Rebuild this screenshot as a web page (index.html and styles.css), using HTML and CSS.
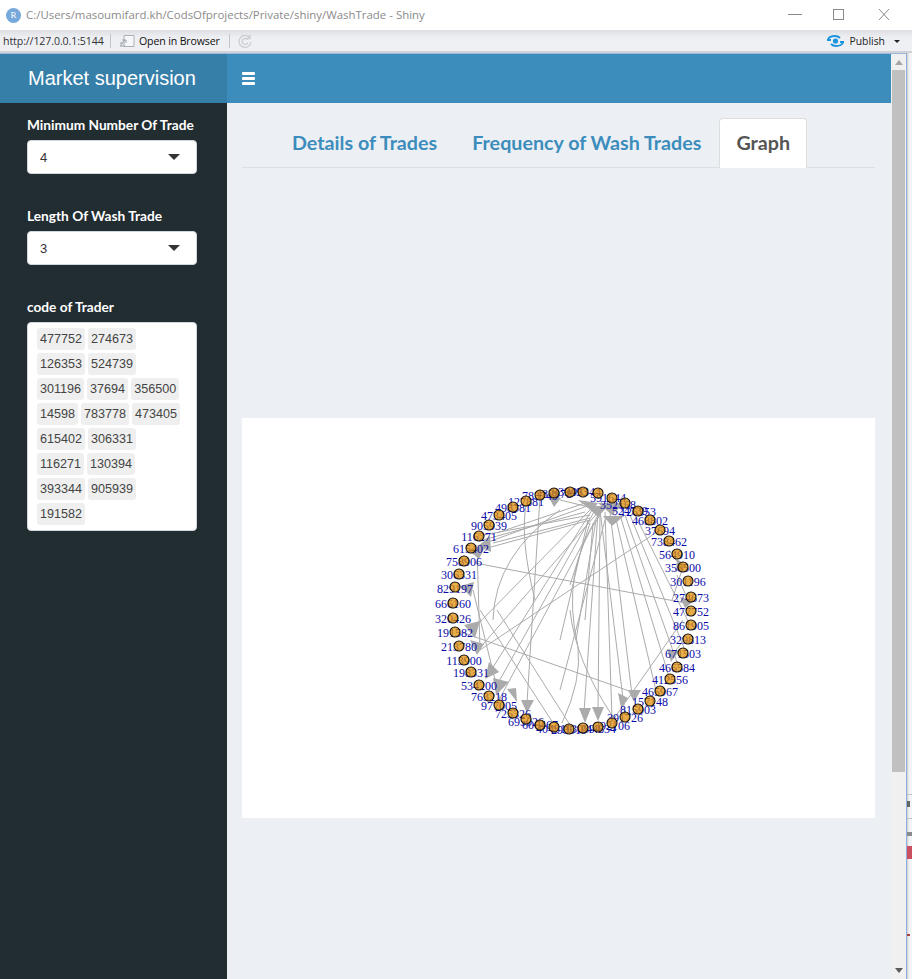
FILE: index.html
```html
<!DOCTYPE html>
<html lang="en">
<head>
<meta charset="utf-8">
<title>WashTrade - Shiny</title>
<link rel="stylesheet" href="styles.css">
</head>
<body>
<header class="titlebar">
  <span class="r-logo">R</span>
  <span class="title-text">C:/Users/masoumifard.kh/CodsOfprojects/Private/shiny/WashTrade - Shiny</span>
  <svg class="win-controls" width="110" height="16" viewBox="0 0 110 16">
    <path class="win-stroke" d="M2 7.500H16"/>
    <rect class="win-stroke" x="47.500" y="2.500" width="10" height="10"/>
    <path class="win-stroke" d="M93 2L103 13M103 2L93 13"/>
  </svg>
</header>
<div class="toolbar">
  <span class="url">http://127.0.0.1:5144</span>
  <span class="sep"></span>
  <svg class="tool-icon" width="16" height="14" viewBox="0 0 16 14">
    <path class="open-doc" d="M5 1.500H15V12.500H5Z"/>
    <path class="open-arrow" d="M1 12L6 6M3 6H7V9M1 9H4M1 12H6"/>
  </svg>
  <span class="open">Open in Browser</span>
  <span class="sep sep-b"></span>
  <svg class="tool-icon" width="16" height="16" viewBox="0 0 16 16">
    <path class="reload" d="M13 5A6 6 0 1 0 14 9M13 1.500V5.500H9"/>
    <path class="reload" d="M10.500 6.500A3 3 0 1 0 11 9.500"/>
  </svg>
  <span class="publish">
    <svg width="17" height="12" viewBox="0 0 17 12">
      <path class="pub-stroke" d="M1 4.500C2 2 5 1 8 1C10 1 11.500 1.500 13 3M16 7.500C15 10 12 11 9 11C7 11 5.500 10.500 4 9"/>
      <path class="pub-stroke" d="M0 5H4M13 7H17"/>
      <circle class="pub-dot" cx="8.500" cy="6" r="2.600"/>
    </svg>
    <span class="publish-text">Publish</span>
    <i class="mini-caret"></i>
  </span>
</div>
<div class="window">
  <div class="app">
    <aside class="sidebar">
      <div class="logo">Market supervision</div>
      <div class="side-form">
        <div class="field">
          <label class="field-label">Minimum Number Of Trade</label>
          <div class="select"><span>4</span><i class="caret"></i></div>
        </div>
        <div class="field">
          <label class="field-label">Length Of Wash Trade</label>
          <div class="select"><span>3</span><i class="caret"></i></div>
        </div>
        <div class="field">
          <label class="field-label">code of Trader</label>
          <div class="tags">
            <span class="tag">477752</span><span class="tag">274673</span>
            <span class="tag">126353</span><span class="tag">524739</span>
            <span class="tag">301196</span><span class="tag">37694</span><span class="tag">356500</span>
            <span class="tag">14598</span><span class="tag">783778</span><span class="tag">473405</span>
            <span class="tag">615402</span><span class="tag">306331</span>
            <span class="tag">116271</span><span class="tag">130394</span>
            <span class="tag">393344</span><span class="tag">905939</span>
            <span class="tag">191582</span>
          </div>
        </div>
      </div>
    </aside>
    <main class="main">
      <div class="navbar">
        <span class="burger"><i></i><i></i><i></i></span>
      </div>
      <div class="content">
        <nav class="tabs">
          <a class="tab">Details of Trades</a>
          <a class="tab">Frequency of Wash Trades</a>
          <a class="tab tab-active">Graph</a>
        </nav>
        <div class="plot">
          <svg class="graph" width="633" height="400" viewBox="242 418 633 400">
            <g class="edges">
              <path d="M480 545L590 505M480 550L590 520M478 536L590 515M479 541L585 512M497 533L588 502M493 543L590 518M560 500L593 508"/>
              <path d="M475 563L685 603M540 497L527 703M660 530L480 650M461 632L635 693M683 620L613 720"/>
              <path d="M493 620Q495 555 560 510M477 545L480 650M480 610L553 723M497 610L570 725M473 590L500 700"/>
              <path d="M570 610Q575 660 613 717M600 515Q560 570 578 647Q582 680 562 723M526 505Q520 540 535 600"/>
              <path d="M598 512L584 712M600 512L598 710M605 512L612 718M610 512L632 695M600 510L625 715M615 515L657 695M620 515L670 680M625 515L678 665M630 515L685 650M635 515L690 625"/>
              <path d="M595 510L497 685M592 510L490 672M600 510L478 650M590 510L470 632M598 515L499 700M588 520L560 640M590 523L570 585M593 523L585 620M596 520L576 640M605 520L560 690"/>
              <path d="M683 567L672 600M677 575L688 600M669 550L683 570M684 640L672 655"/>
            </g>
            <g class="arrows">
              <path d="M578 500L598 503L592 511Z"/>
              <path d="M586 506H608L598 517Z"/>
              <path d="M598 503H624L612 515Z"/>
              <path d="M603 516H624L612 526Z"/>
              <path d="M547 494L561 498L554 507Z"/>
              <path d="M478 546L490 536L491 552Z"/>
              <path d="M468 550L486 545L479 559Z"/>
              <path d="M460 586L474 582L471 597Z"/>
              <path d="M464 625L480 621L475 638Z"/>
              <path d="M470 640L484 644L477 655Z"/>
              <path d="M485 679L489 662L499 672Z"/>
              <path d="M496 695L493 678L509 682Z"/>
              <path d="M517 702L507 689L516 688Z"/>
              <path d="M521 700H534L527 713Z"/>
              <path d="M579 708H591L585 723Z"/>
              <path d="M592 707H604L598 721Z"/>
              <path d="M621 708L618 693L628 698Z"/>
              <path d="M634 702L628 690H641Z"/>
              <path d="M680 597L694 601L685 608Z"/>
              <path d="M677 559L687 566L676 572Z"/>
              <path d="M667 649L679 651L671 662Z"/>
            </g>
            <g class="labels">
              <text x="570" y="496">939493</text><text x="583" y="496">393344</text><text x="608" y="502">591644</text><text x="618" y="509">352168</text><text x="630" y="515">524739</text><text x="638" y="516">126353</text><text x="650" y="525">468802</text><text x="660" y="535">37694</text><text x="669" y="546">738462</text><text x="677" y="559">564910</text><text x="683" y="572">356500</text><text x="688" y="586">301196</text><text x="691" y="602">274673</text><text x="691" y="616">477752</text><text x="691" y="630">861905</text><text x="688" y="644">329813</text><text x="683" y="658">671503</text><text x="677" y="672">466584</text><text x="670" y="684">412556</text><text x="660" y="696">465967</text><text x="650" y="706">157148</text><text x="638" y="714">815903</text><text x="625" y="722">391726</text><text x="612" y="730">392106</text><text x="598" y="733">244834</text><text x="583" y="733">130394</text><text x="569" y="734">293519</text><text x="554" y="733">404319</text><text x="540" y="729">606467</text><text x="526" y="726">695026</text><text x="513" y="718">725326</text><text x="499" y="710">977005</text><text x="489" y="701">763218</text><text x="479" y="690">534200</text><text x="471" y="677">198331</text><text x="464" y="665">113900</text><text x="459" y="651">213780</text><text x="455" y="637">191582</text><text x="453" y="623">320426</text><text x="453" y="608">666160</text><text x="455" y="593">829197</text><text x="459" y="579">306331</text><text x="464" y="566">758906</text><text x="471" y="553">615402</text><text x="479" y="541">116271</text><text x="489" y="530">905939</text><text x="499" y="520">473405</text><text x="513" y="512">498381</text><text x="526" y="506">127881</text><text x="540" y="500">783749</text><text x="554" y="498">482978</text>
            </g>
            <g class="nodes">
              <circle cx="570" cy="492" r="5"/><circle cx="583" cy="492" r="5"/><circle cx="598" cy="493" r="5"/><circle cx="612" cy="498" r="5"/><circle cx="625" cy="503" r="5"/><circle cx="638" cy="511" r="5"/><circle cx="650" cy="520" r="5"/><circle cx="660" cy="530" r="5"/><circle cx="669" cy="541" r="5"/><circle cx="677" cy="554" r="5"/><circle cx="683" cy="567" r="5"/><circle cx="688" cy="581" r="5"/><circle cx="691" cy="597" r="5"/><circle cx="691" cy="611" r="5"/><circle cx="691" cy="625" r="5"/><circle cx="688" cy="639" r="5"/><circle cx="683" cy="653" r="5"/><circle cx="677" cy="667" r="5"/><circle cx="670" cy="679" r="5"/><circle cx="660" cy="691" r="5"/><circle cx="650" cy="701" r="5"/><circle cx="638" cy="709" r="5"/><circle cx="625" cy="717" r="5"/><circle cx="612" cy="723" r="5"/><circle cx="598" cy="727" r="5"/><circle cx="583" cy="728" r="5"/><circle cx="569" cy="729" r="5"/><circle cx="554" cy="727" r="5"/><circle cx="540" cy="725" r="5"/><circle cx="526" cy="719" r="5"/><circle cx="513" cy="713" r="5"/><circle cx="499" cy="705" r="5"/><circle cx="489" cy="696" r="5"/><circle cx="479" cy="685" r="5"/><circle cx="471" cy="672" r="5"/><circle cx="464" cy="660" r="5"/><circle cx="459" cy="646" r="5"/><circle cx="455" cy="632" r="5"/><circle cx="453" cy="618" r="5"/><circle cx="453" cy="603" r="5"/><circle cx="455" cy="587" r="5"/><circle cx="459" cy="574" r="5"/><circle cx="464" cy="561" r="5"/><circle cx="471" cy="548" r="5"/><circle cx="479" cy="536" r="5"/><circle cx="489" cy="525" r="5"/><circle cx="499" cy="515" r="5"/><circle cx="513" cy="507" r="5"/><circle cx="526" cy="501" r="5"/><circle cx="540" cy="495" r="5"/><circle cx="554" cy="493" r="5"/>
            </g>
          </svg>
        </div>
      </div>
    </main>
    <div class="scrollbar">
      <i class="arrow-up"></i>
      <span class="thumb"></span>
      <i class="arrow-down"></i>
    </div>
  </div>
  <div class="edge-strip">
    <span class="strip-d"></span>
    <span class="strip-e"></span>
    <span class="strip-f"></span>
    <span class="strip-a"></span>
    <span class="strip-b"></span>
    <span class="strip-c"></span>
  </div>
</div>
</body>
</html>
```

FILE: styles.css
```css
* { box-sizing: border-box; }
html, body { margin: 0; padding: 0; }
body {
  width: 912px;
  height: 979px;
  overflow: hidden;
  display: flex;
  flex-direction: column;
  background: #fff;
  font-family: "Liberation Sans", Arial, sans-serif;
}
.titlebar {
  height: 30px;
  flex: none;
  display: flex;
  align-items: center;
  padding-left: 6px;
  background: #fff;
}
.r-logo {
  width: 15px;
  height: 15px;
  border-radius: 50%;
  background: #76a8dc;
  color: #fff;
  font: 9px/15px "Liberation Serif", serif;
  text-align: center;
}
.title-text {
  margin-left: 5px;
  color: #8b8b8b;
  font: 11.430px/1 "Open Sans", sans-serif;
  white-space: nowrap;
}
.win-controls { margin-left: auto; margin-right: 16px; }
.win-stroke { fill: none; stroke: #8a8a8a; stroke-width: 1; }
.toolbar {
  height: 23px;
  flex: none;
  display: flex;
  align-items: center;
  padding: 1px 0 0 3px;
  background: linear-gradient(#dedfe3, #eeeff3 35%, #eff0f4);
  border-bottom: 2px solid #d2d3d6;
  font-family: "Open Sans", sans-serif;
  font-size: 10.600px;
}
.url { color: #333; width: 107px; white-space: nowrap; letter-spacing: -0.1px; }
.sep { width: 1px; height: 14px; background: #c4c5c8; margin-right: 8px; }
.sep-b { margin-left: 9px; margin-right: 7px; }
.tool-icon { flex: none; }
.open { margin-left: 4px; width: 81px; color: #111; white-space: nowrap; letter-spacing: -0.15px; }
.open-doc { fill: #f6f7f9; stroke: #aab0b8; }
.open-arrow { fill: none; stroke: #9ca3ad; }
.reload { fill: none; stroke: #c9ced4; stroke-width: 1.300; }
.publish { margin-left: auto; display: flex; align-items: center; margin-right: 12px; }
.pub-stroke { fill: none; stroke: #1b96de; stroke-width: 2; }
.pub-dot { fill: #1b96de; }
.publish-text { margin-left: 5px; color: #222; font-size: 10.400px; }
.mini-caret {
  margin-left: 9px;
  border: 3px solid transparent;
  border-top: 3px solid #222;
  border-bottom: 0;
}
.window {
  flex: 1;
  min-height: 0;
  display: flex;
}
.app {
  width: 907px;
  display: flex;
  border-top: 1px solid #9db8dd;
  border-right: 1px solid #8fafdc;
  overflow: hidden;
}
.sidebar {
  width: 227px;
  flex: none;
  background: #222d32;
  display: flex;
  flex-direction: column;
}
.logo {
  height: 49px;
  background: #367fa9;
  color: #fff;
  font-size: 20px;
  line-height: 49px;
  padding-left: 28px;
}
.side-form { padding: 13px 30px 0 27px; }
.field { margin-bottom: 33px; }
.field-label {
  display: block;
  color: #fff;
  font: 700 13.700px/18px Lato, sans-serif;
  margin-bottom: 6px;
  white-space: nowrap;
}
.select {
  height: 34px;
  background: #fff;
  border: 1px solid #d2d6de;
  border-radius: 4px;
  display: flex;
  align-items: center;
  justify-content: space-between;
  padding: 0 16px 0 12px;
  color: #333;
  font-size: 13px;
}
.caret {
  border: 6px solid transparent;
  border-top: 6px solid #333;
  border-bottom: 0;
}
.tags {
  background: #fff;
  border: 1px solid #d2d6de;
  border-radius: 4px;
  padding: 5px 9px 2px;
  display: flex;
  flex-wrap: wrap;
  color: #444;
  height: 209px;
  align-content: flex-start;
}
.tag {
  background: #efefef;
  border-radius: 3px;
  padding: 0 3px;
  margin: 0 3px 3px 0;
  font-size: 12.600px;
  line-height: 22px;
}
.main {
  flex: 1;
  min-width: 0;
  display: flex;
  flex-direction: column;
  background: #ecf0f5;
}
.navbar {
  height: 49px;
  flex: none;
  background: #3c8dbc;
  display: flex;
  align-items: center;
  padding-left: 15px;
}
.burger { display: flex; flex-direction: column; gap: 2.500px; }
.burger i { display: block; width: 13px; height: 2.500px; background: #fff; border-radius: 1px; }
.content { flex: 1; padding: 15px 16px 0 15px; }
.tabs {
  display: flex;
  height: 50px;
  padding-left: 33px;
  border-bottom: 1px solid #dcdfe3;
}
.tab {
  height: 50px;
  padding: 0 16px;
  margin-right: 1px;
  color: #3c8dbc;
  font: 700 19.700px/48px Lato, sans-serif;
  white-space: nowrap;
  border: 1px solid transparent;
  border-bottom: 0;
}
.tab-active {
  background: #fff;
  color: #555;
  border-color: #dddddd;
  border-radius: 4px 4px 0 0;
}
.plot {
  margin-top: 250px;
  height: 400px;
  background: #fff;
}
.graph { display: block; }
.edges path { fill: none; stroke: #ababab; stroke-width: 1; }
.arrows path { fill: #ababab; }
.nodes circle { fill: #e08e00; fill-opacity: 0.72; stroke: #101010; stroke-width: 1.100; }
.labels text {
  fill: #0a0aa8;
  font-family: "Liberation Serif", serif;
  font-size: 12px;
  text-anchor: middle;
}
.scrollbar {
  width: 15px;
  flex: none;
  background: #f0f0f0;
  display: flex;
  flex-direction: column;
  align-items: center;
  padding: 6px 1px;
}
.arrow-up { border: 4px solid transparent; border-bottom: 5px solid #a5a5a5; border-top: 0; }
.arrow-down { border: 4px solid transparent; border-top: 5px solid #5a5a5a; border-bottom: 0; margin-top: auto; margin-bottom: 0; }
.thumb { display: block; width: 13px; height: 702px; margin-top: 5px; background: #c0c0c0; }
.edge-strip {
  flex: 1;
  background: linear-gradient(90deg, #c9c9c9, #f2f3f5 40%);
  display: flex;
  flex-direction: column;
  padding-top: 741px;
}
.strip-d { height: 1px; width: 5px; background: #c4c4c4; }
.strip-e { height: 6px; width: 3px; background: #666; margin-top: 6px; }
.strip-f { height: 1px; width: 5px; background: #c4c4c4; margin-top: 11px; }
.strip-a { height: 4px; width: 5px; background: #8a8d90; margin-top: 13px; }
.strip-b { height: 13px; width: 5px; background: #c8505f; margin-top: 10px; }
.strip-c { height: 2px; width: 3px; background: #b04040; margin-top: 75px; }
```
